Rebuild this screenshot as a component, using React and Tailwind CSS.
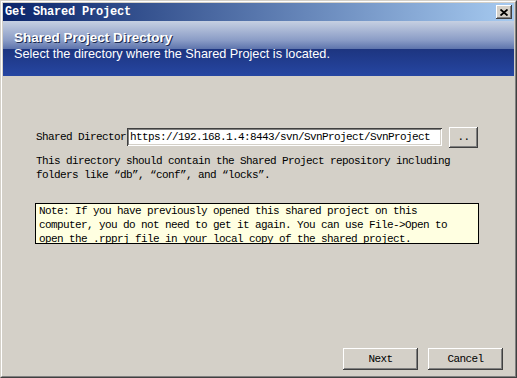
export default function App() {
  const mono = "font-['Liberation_Mono','DejaVu_Sans_Mono',monospace]";
  const raised =
    "shadow-[inset_-1px_-1px_#404040,inset_1px_1px_#ffffff,inset_-2px_-2px_#808080,inset_2px_2px_#d4d0c8]";
  return (
    <div className="w-[517px] h-[378px] bg-[#d4d0c8] border-l border-t border-[#d4d0c8] border-r border-b border-r-[#404040] border-b-[#404040]">
      <div className="w-full h-full border-l border-t border-white border-r border-b border-r-[#808080] border-b-[#808080] p-px flex flex-col">
        {/* Title bar */}
        <div className="h-[18px] flex items-center justify-between pl-[2px] pr-[2px] bg-[linear-gradient(to_right,#0a246a,#a6caf0)]">
          <span className={`${mono} text-[12px] font-bold tracking-[-0.2px] text-white leading-none`}>
            Get Shared Project
          </span>
          <div className={`w-[16px] h-[14px] bg-[#d4d0c8] ${raised} flex items-center justify-center`}>
            <svg width="8" height="7" viewBox="0 0 8 7">
              <path d="M0.5 0.5 L7.5 6.5 M7.5 0.5 L0.5 6.5" stroke="#000" strokeWidth="1.8" />
            </svg>
          </div>
        </div>
        {/* Header */}
        <div className="h-[55px] flex flex-col pl-[11px] pt-[8px] bg-[linear-gradient(to_bottom,#c6d0e2_0%,#8a9cc6_35%,#6076ae_50%,#1d3580_51%,#2646a2_100%)]">
          <div className="font-['Liberation_Sans',Arial,sans-serif] text-[13.5px] font-bold text-white leading-[17px] [text-shadow:1px_1px_0_#1a2a50]">
            Shared Project Directory
          </div>
          <div className="font-['Liberation_Sans',Arial,sans-serif] text-[12.7px] text-white leading-[15px] mt-[1px]">
            Select the directory where the Shared Project is located.
          </div>
        </div>
        {/* Body */}
        <div className={`flex-1 flex flex-col pl-[33px] pt-[51px] ${mono} text-[11px] tracking-[-0.6px] text-black`}>
          <div className="flex items-center h-[20px]">
            <span className="w-[91px] leading-[14px] whitespace-nowrap overflow-hidden">Shared Director</span>
            <div className="w-[315px] h-[18px] bg-white flex items-center pl-[3px] shadow-[inset_1px_1px_#404040,inset_-1px_-1px_#ffffff,inset_2px_2px_#808080,inset_-2px_-2px_#d4d0c8] whitespace-nowrap overflow-hidden">
              https://192.168.1.4:8443/svn/SvnProject/SvnProject
            </div>
            <div className={`ml-[7px] w-[29px] h-[21px] bg-[#d4d0c8] ${raised} flex items-center justify-center leading-none`}>
              ..
            </div>
          </div>
          <div className="mt-[7px] leading-[14px] whitespace-nowrap">
            <div>This directory should contain the Shared Project repository including</div>
            <div>folders like “db”, “conf”, and “locks”.</div>
          </div>
          <div className="mt-[21px] ml-[-1px] w-[444px] h-[41px] overflow-hidden border border-black bg-[#ffffe1] pl-[3px] leading-[14px] whitespace-nowrap">
            <div>Note: If you have previously opened this shared project on this</div>
            <div>computer, you do not need to get it again. You can use File-&gt;Open to</div>
            <div>open the .rpprj file in your local copy of the shared project.</div>
          </div>
          <div className="flex-1" />
          <div className="flex justify-end gap-[10px] pr-[11px] pb-[5px]">
            <div className={`w-[75px] h-[22px] bg-[#d4d0c8] ${raised} flex items-center justify-center`}>Next</div>
            <div className={`w-[75px] h-[22px] bg-[#d4d0c8] ${raised} flex items-center justify-center`}>Cancel</div>
          </div>
        </div>
      </div>
    </div>
  );
}
